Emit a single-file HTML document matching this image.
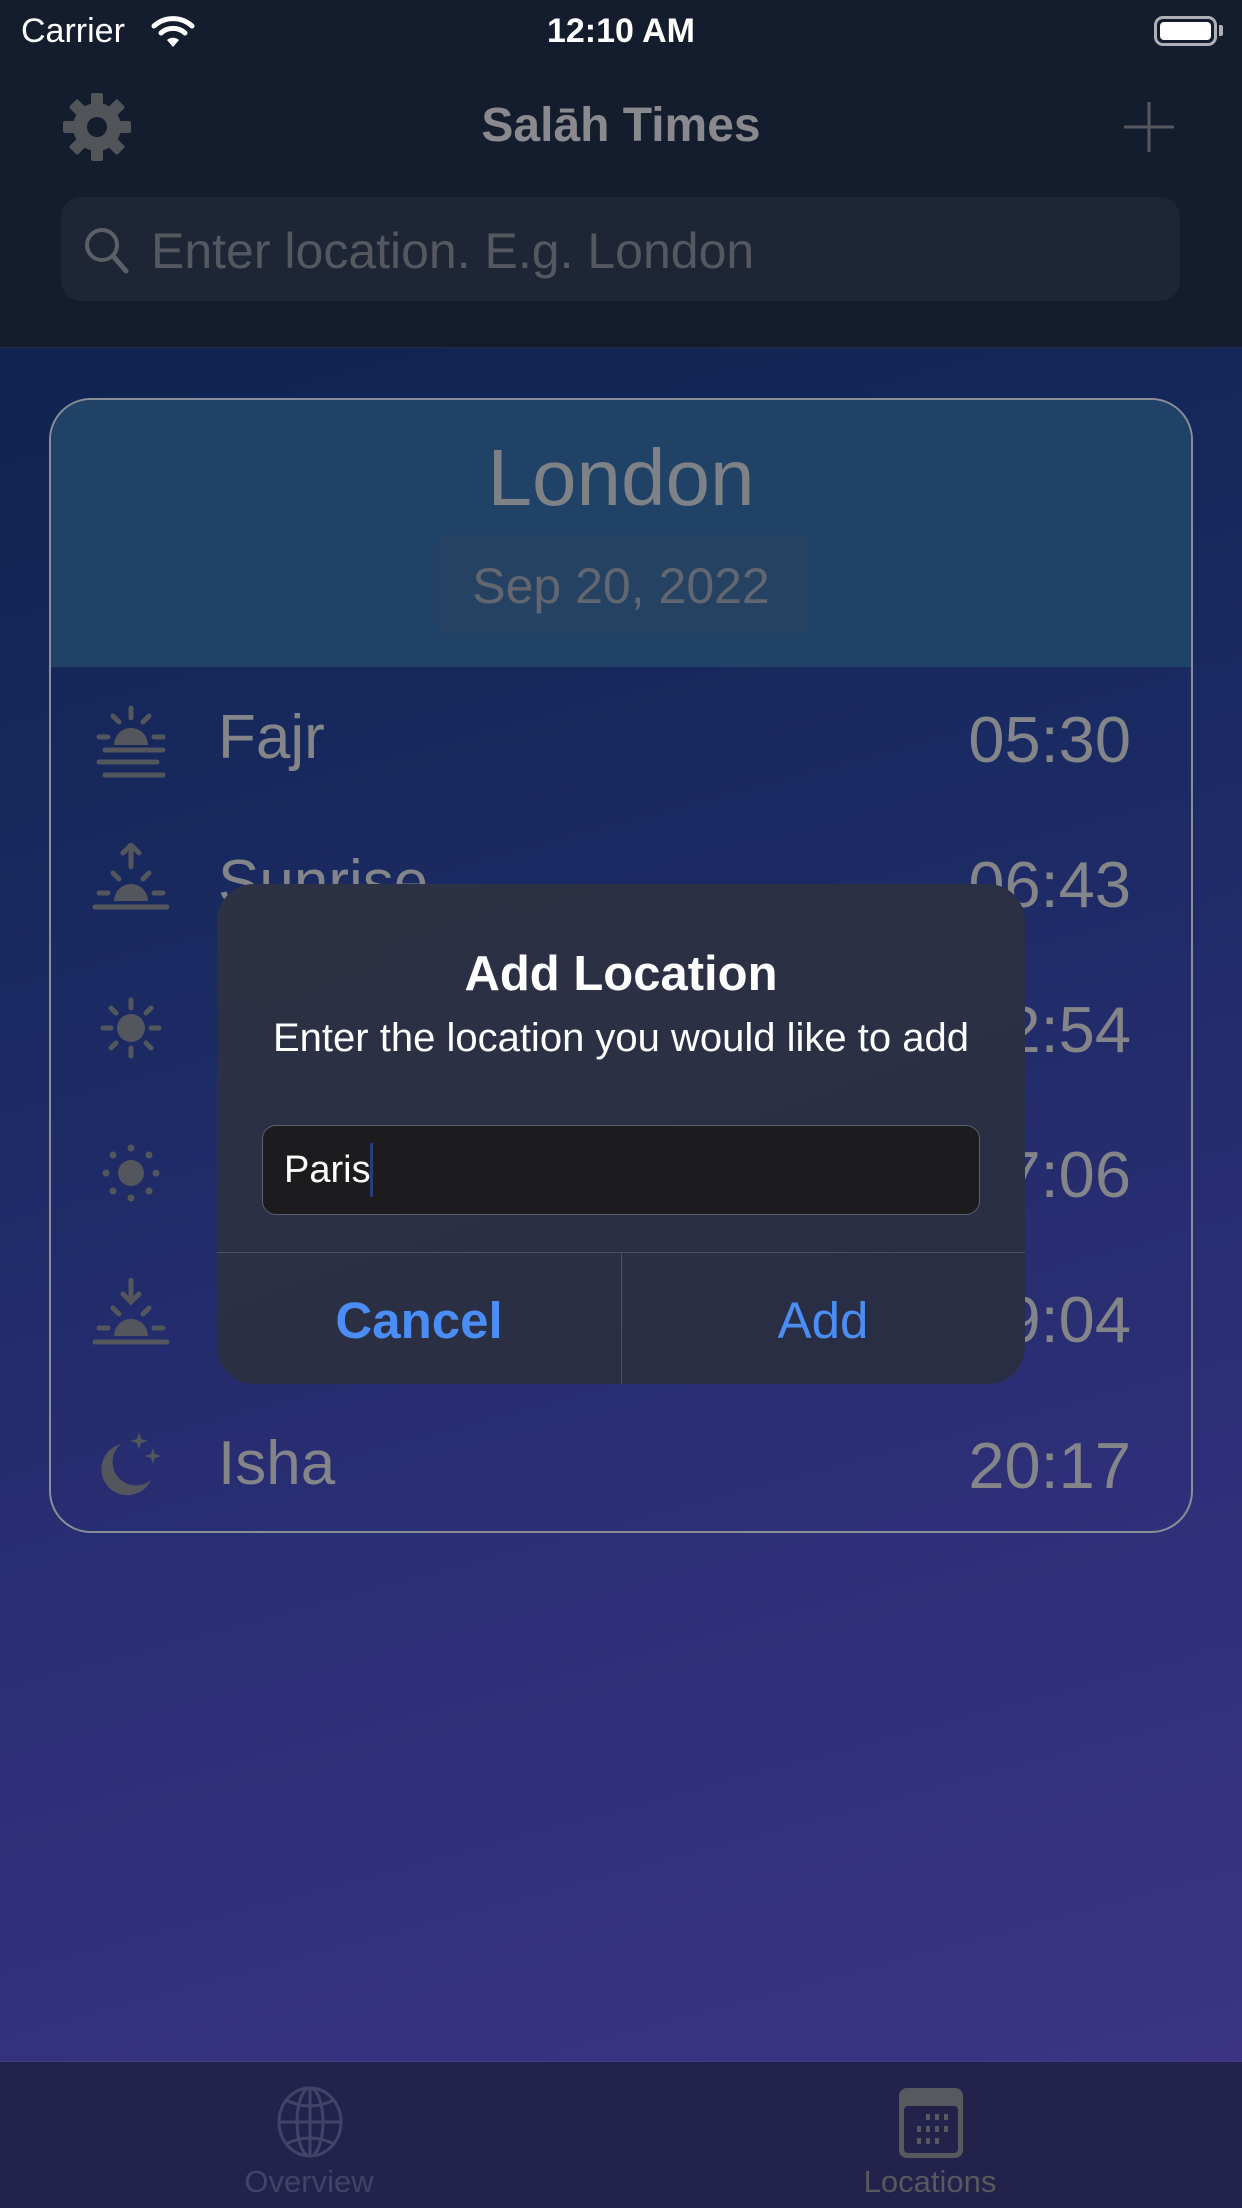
<!DOCTYPE html>
<html><head><meta charset="utf-8"><style>
*{margin:0;padding:0;box-sizing:border-box}
body{width:1242px;height:2208px;overflow:hidden;font-family:"Liberation Sans",sans-serif;position:relative;background:linear-gradient(165deg,#0a2148 0%,#1a2a62 40%,#2e2f78 70%,#3f3586 100%)}
.abs{position:absolute}
.nav{left:0;top:0;width:1242px;height:348px;background:#131d2d;border-bottom:1px solid #1f2c44}
.t{color:#848488;white-space:nowrap}
.row{position:absolute;left:0;width:1242px;height:100px}
.row .n{position:absolute;left:218px;top:14px;font-size:62px;color:#848589}
.row .tm{position:absolute;right:111px;top:14px;font-size:65px;color:#848589}
.row svg{position:absolute;left:91px;top:10px}
</style></head><body>
<div class="abs nav"></div>
<div class="abs" style="left:21px;top:12px;font-size:34px;color:#fff">Carrier</div>
<svg class="abs" style="left:150px;top:14px" width="46" height="34" viewBox="0 0 46 34"><path d="M4 12 A28 28 0 0 1 42 12" stroke="#fff" stroke-width="5" fill="none" stroke-linecap="round"/><path d="M11 19 A18 18 0 0 1 35 19" stroke="#fff" stroke-width="5" fill="none" stroke-linecap="round"/><path d="M17 26 L23 33 L29 26 A9 9 0 0 0 17 26Z" fill="#fff"/></svg>
<div class="abs" style="left:0;width:1242px;text-align:center;top:12px;font-size:34px;color:#fff;font-weight:bold">12:10 AM</div>
<div class="abs" style="left:1154px;top:16px;width:63px;height:30px;border:3px solid #aeb0b5;border-radius:9px;padding:3px"><div style="width:100%;height:100%;background:#fff;border-radius:4px"></div></div>
<div class="abs" style="left:1219px;top:25px;width:4px;height:11px;background:#aeb0b5;border-radius:0 2px 2px 0"></div>
<svg class="abs" style="left:63px;top:93px" width="68" height="68" viewBox="0 0 68 68"><g fill="#515459"><circle cx="34" cy="34" r="24"/><g id="t"><rect x="28" y="0" width="12" height="14" rx="2"/><rect x="28" y="54" width="12" height="14" rx="2"/></g><use href="#t" transform="rotate(45 34 34)"/><use href="#t" transform="rotate(90 34 34)"/><use href="#t" transform="rotate(135 34 34)"/></g><circle cx="34" cy="34" r="10" fill="#131d2d"/></svg>
<div class="abs t" style="left:0;width:1242px;text-align:center;top:98px;font-size:48px;font-weight:bold;color:#8a8a8e">Salāh Times</div>
<svg class="abs" style="left:1122px;top:100px" width="54" height="54"><path d="M27 2V52M2 27H52" stroke="#57595e" stroke-width="3"/></svg>
<div class="abs" style="left:61px;top:197px;width:1119px;height:104px;background:#1e2635;border-radius:20px"></div>
<svg class="abs" style="left:82px;top:225px" width="50" height="52"><circle cx="20" cy="20" r="15" stroke="#5c5f66" stroke-width="4" fill="none"/><path d="M31 31L44 46" stroke="#5c5f66" stroke-width="5" stroke-linecap="round"/></svg>
<div class="abs t" style="left:151px;top:222px;font-size:50px;color:#55585f">Enter location. E.g. London</div>

<div class="abs" style="left:49px;top:398px;width:1144px;height:1135px;border:2px solid #8a8e98;border-radius:42px;overflow:hidden">
<div style="height:267px;background:#1f4266"></div></div>
<div class="abs t" style="left:0;width:1242px;text-align:center;top:432px;font-size:80px;color:#7e8185">London</div>
<div class="abs" style="left:435px;top:535px;width:375px;height:99px;background:#264262;border-radius:8px"></div>
<div class="abs t" style="left:0;width:1242px;text-align:center;top:557px;font-size:50px;color:#616670">Sep 20, 2022</div>

<div class="row" style="top:688px"><svg width="80" height="90" viewBox="0 0 80 90"><g stroke="#53565d" stroke-width="5" stroke-linecap="round" fill="none"><path d="M40 10v10M22 18l6 6M58 18l-6 6M8 39h9M63 39h9M14 52h58M8 64h58M14 77h58"/></g><path d="M23 47a17 17 0 0 1 34 0z" fill="#53565d"/></svg><div class="n">Fajr</div><div class="tm">05:30</div></div>
<div class="row" style="top:833px"><svg width="80" height="80" viewBox="0 0 80 80"><g stroke="#53565d" stroke-width="5" stroke-linecap="round" fill="none"><path d="M40 2v22M32 10l8-8 8 8M22 30l6 6M58 30l-6 6M8 50h9M63 50h9M4 64h72"/></g><path d="M23 58a17 17 0 0 1 34 0z" fill="#53565d"/></svg><div class="n">Sunrise</div><div class="tm">06:43</div></div>
<div class="row" style="top:978px"><svg width="80" height="80" viewBox="0 0 80 80"><g stroke="#53565d" stroke-width="5" stroke-linecap="round" fill="none"><path d="M40 12v8M40 60v8M12 40h8M60 40h8M20 20l5 5M60 20l-5 5M20 60l5-5M60 60l-5-5"/></g><circle cx="40" cy="40" r="14" fill="#53565d"/></svg><div class="n">Dhuhr</div><div class="tm">12:54</div></div>
<div class="row" style="top:1123px"><svg width="80" height="80" viewBox="0 0 80 80"><g fill="#53565d"><circle cx="40" cy="40" r="13"/><circle cx="40" cy="15" r="3.5"/><circle cx="40" cy="65" r="3.5"/><circle cx="15" cy="40" r="3.5"/><circle cx="65" cy="40" r="3.5"/><circle cx="22" cy="22" r="3.5"/><circle cx="58" cy="22" r="3.5"/><circle cx="22" cy="58" r="3.5"/><circle cx="58" cy="58" r="3.5"/></g></svg><div class="n">Asr</div><div class="tm">17:06</div></div>
<div class="row" style="top:1268px"><svg width="80" height="80" viewBox="0 0 80 80"><g stroke="#53565d" stroke-width="5" stroke-linecap="round" fill="none"><path d="M40 2v22M32 16l8 8 8-8M22 30l6 6M58 30l-6 6M8 50h9M63 50h9M4 64h72"/></g><path d="M23 58a17 17 0 0 1 34 0z" fill="#53565d"/></svg><div class="n">Maghrib</div><div class="tm">19:04</div></div>
<div class="row" style="top:1414px"><svg width="80" height="80" viewBox="0 0 80 80"><path d="M30 20a26 26 0 1 0 30 36a22 22 0 0 1 -30 -36z" fill="#53565d"/><path d="M48 8l2 7 7 2-7 2-2 7-2-7-7-2 7-2z M62 24l2 6 6 2-6 2-2 6-2-6-6-2 6-2z" fill="#53565d"/></svg><div class="n">Isha</div><div class="tm">20:17</div></div>

<div class="abs" style="left:217px;top:884px;width:808px;height:500px;background:linear-gradient(160deg,#2c3143,#2a2e45);border-radius:37px;overflow:hidden">
<div style="position:absolute;left:0;top:368px;width:808px;height:1px;background:#4a4f62"></div>
<div style="position:absolute;left:404px;top:368px;width:1px;height:132px;background:#4a4f62"></div>
</div>
<div class="abs" style="left:0;width:1242px;text-align:center;top:946px;font-size:49px;font-weight:bold;color:#fff">Add Location</div>
<div class="abs" style="left:0;width:1242px;text-align:center;top:1016px;font-size:40px;color:#fff">Enter the location you would like to add</div>
<div class="abs" style="left:262px;top:1125px;width:718px;height:90px;background:#1c1c1e;border:1.5px solid #5b5f70;border-radius:14px"></div>
<div class="abs" style="left:284px;top:1149px;font-size:38px;color:#fff">Paris</div>
<div class="abs" style="left:370px;top:1143px;width:3px;height:54px;background:#2a3c7a"></div>
<div class="abs" style="left:217px;width:404px;text-align:center;top:1291px;font-size:51px;font-weight:bold;color:#4a8ef5">Cancel</div>
<div class="abs" style="left:621px;width:404px;text-align:center;top:1291px;font-size:51px;color:#4a8ef5">Add</div>

<div class="abs" style="left:0;top:2061px;width:1242px;height:147px;background:#23224a;border-top:1px solid #3f3d80"></div>
<svg class="abs" style="left:276px;top:2086px" width="68" height="72" viewBox="0 0 68 72"><g stroke="#43436a" stroke-width="3" fill="none"><ellipse cx="34" cy="36" rx="31" ry="34"/><ellipse cx="34" cy="36" rx="13" ry="34"/><path d="M34 2v68M3 36h62M10 14q24 12 48 0M10 58q24-12 48 0"/></g></svg>
<div class="abs" style="left:209px;width:200px;text-align:center;top:2164px;font-size:31px;color:#43436a">Overview</div>
<svg class="abs" style="left:899px;top:2088px" width="64" height="70" viewBox="0 0 64 70"><rect x="0" y="0" width="64" height="70" rx="8" fill="#58585f"/><rect x="5" y="18" width="54" height="47" rx="4" fill="#23224a"/><g fill="#58585f"><rect x="27" y="26" width="4" height="6"/><rect x="36" y="26" width="4" height="6"/><rect x="45" y="26" width="4" height="6"/><rect x="18" y="38" width="4" height="6"/><rect x="27" y="38" width="4" height="6"/><rect x="36" y="38" width="4" height="6"/><rect x="45" y="38" width="4" height="6"/><rect x="18" y="50" width="4" height="6"/><rect x="27" y="50" width="4" height="6"/><rect x="36" y="50" width="4" height="6"/></g></svg>
<div class="abs" style="left:830px;width:200px;text-align:center;top:2164px;font-size:31px;color:#58585f">Locations</div>
</body></html>
